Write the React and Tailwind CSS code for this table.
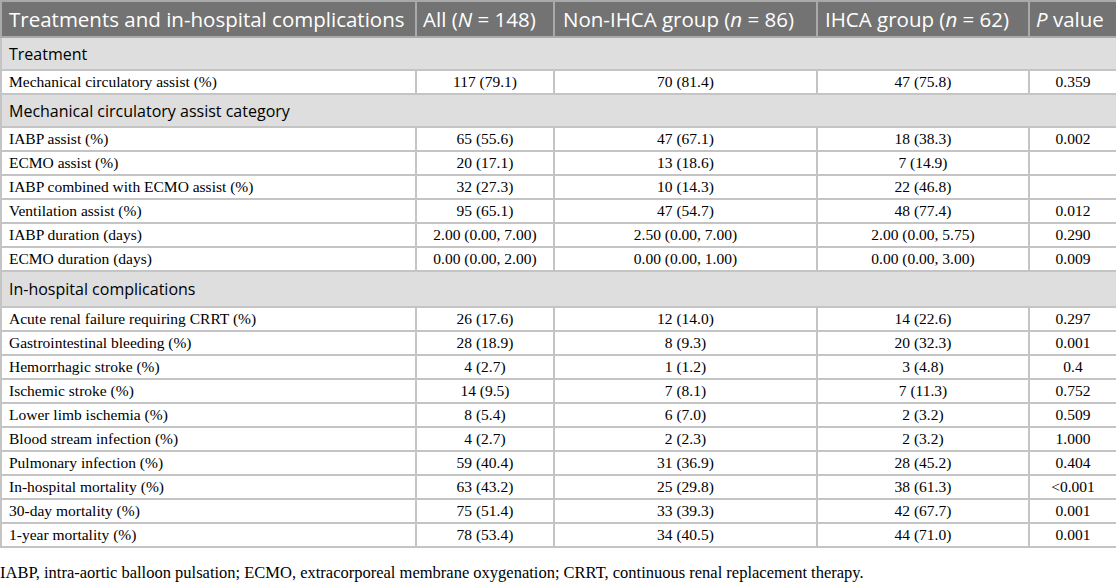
import React from "react";

const sections = [
  {
    title: "Treatment",
    h: "h-[33px]",
    rows: [["Mechanical circulatory assist (%)", "117 (79.1)", "70 (81.4)", "47 (75.8)", "0.359"]],
  },
  {
    title: "Mechanical circulatory assist category",
    h: "h-[33px]",
    rows: [
      ["IABP assist (%)", "65 (55.6)", "47 (67.1)", "18 (38.3)", "0.002"],
      ["ECMO assist (%)", "20 (17.1)", "13 (18.6)", "7 (14.9)", ""],
      ["IABP combined with ECMO assist (%)", "32 (27.3)", "10 (14.3)", "22 (46.8)", ""],
      ["Ventilation assist (%)", "95 (65.1)", "47 (54.7)", "48 (77.4)", "0.012"],
      ["IABP duration (days)", "2.00 (0.00, 7.00)", "2.50 (0.00, 7.00)", "2.00 (0.00, 5.75)", "0.290"],
      ["ECMO duration (days)", "0.00 (0.00, 2.00)", "0.00 (0.00, 1.00)", "0.00 (0.00, 3.00)", "0.009"],
    ],
  },
  {
    title: "In-hospital complications",
    h: "h-[36px]",
    rows: [
      ["Acute renal failure requiring CRRT (%)", "26 (17.6)", "12 (14.0)", "14 (22.6)", "0.297"],
      ["Gastrointestinal bleeding (%)", "28 (18.9)", "8 (9.3)", "20 (32.3)", "0.001"],
      ["Hemorrhagic stroke (%)", "4 (2.7)", "1 (1.2)", "3 (4.8)", "0.4"],
      ["Ischemic stroke (%)", "14 (9.5)", "7 (8.1)", "7 (11.3)", "0.752"],
      ["Lower limb ischemia (%)", "8 (5.4)", "6 (7.0)", "2 (3.2)", "0.509"],
      ["Blood stream infection (%)", "4 (2.7)", "2 (2.3)", "2 (3.2)", "1.000"],
      ["Pulmonary infection (%)", "59 (40.4)", "31 (36.9)", "28 (45.2)", "0.404"],
      ["In-hospital mortality (%)", "63 (43.2)", "25 (29.8)", "38 (61.3)", "<0.001"],
      ["30-day mortality (%)", "75 (51.4)", "33 (39.3)", "42 (67.7)", "0.001"],
      ["1-year mortality (%)", "78 (53.4)", "34 (40.5)", "44 (71.0)", "0.001"],
    ],
  },
];

const sans = "font-['Open_Sans','Noto_Sans',sans-serif]";
const serif = "font-['Liberation_Serif','Times_New_Roman',serif]";

export default function App() {
  return (
    <div className="w-[1116px] h-[585px] bg-white overflow-hidden">
      <table className="w-[1116px] border-collapse table-fixed">
        <colgroup>
          <col className="w-[415px]" />
          <col className="w-[138px]" />
          <col className="w-[263px]" />
          <col className="w-[212px]" />
          <col className="w-[88px]" />
        </colgroup>
        <thead>
          <tr className={`${sans} bg-[#737373] text-white text-[20.5px] leading-none`}>
            <th className="h-[36px] px-[7px] text-left font-normal border-2 border-[#a9a9a9] whitespace-nowrap">
              Treatments and in-hospital complications
            </th>
            <th className="px-[6px] text-left font-normal border-2 border-[#a9a9a9] whitespace-nowrap">
              All (<i>N</i> = 148)
            </th>
            <th className="px-[8px] text-left font-normal border-2 border-[#a9a9a9] whitespace-nowrap">
              Non-IHCA group (<i>n</i> = 86)
            </th>
            <th className="px-[7px] text-left font-normal border-2 border-[#a9a9a9] whitespace-nowrap">
              IHCA group (<i>n</i> = 62)
            </th>
            <th className="px-[6px] text-left font-normal border-2 border-[#a9a9a9] whitespace-nowrap">
              <i>P</i> value
            </th>
          </tr>
        </thead>
        <tbody>
          {sections.map((s) => (
            <React.Fragment key={s.title}>
              <tr className="bg-[#dedede]">
                <td
                  colSpan={5}
                  className={`${sans} ${s.h} px-[7px] text-[16px] leading-none text-black border-2 border-[#c4c4c4]`}
                >
                  {s.title}
                </td>
              </tr>
              {s.rows.map((r) => (
                <tr key={r[0]} className={`${serif} text-[15.5px] leading-none text-black`}>
                  <td className="h-[24px] px-[7px] text-left border-2 border-[#c4c4c4] whitespace-nowrap">{r[0]}</td>
                  <td className="text-center border-2 border-[#c4c4c4] whitespace-nowrap">{r[1]}</td>
                  <td className="text-center border-2 border-[#c4c4c4] whitespace-nowrap">{r[2]}</td>
                  <td className="text-center border-2 border-[#c4c4c4] whitespace-nowrap">{r[3]}</td>
                  <td className="text-center border-2 border-[#c4c4c4] whitespace-nowrap">{r[4]}</td>
                </tr>
              ))}
            </React.Fragment>
          ))}
        </tbody>
      </table>
      <p className={`${serif} mt-[17px] text-[16.5px] leading-none text-black whitespace-nowrap`}>
        IABP, intra-aortic balloon pulsation; ECMO, extracorporeal membrane oxygenation; CRRT, continuous renal replacement therapy.
      </p>
    </div>
  );
}
